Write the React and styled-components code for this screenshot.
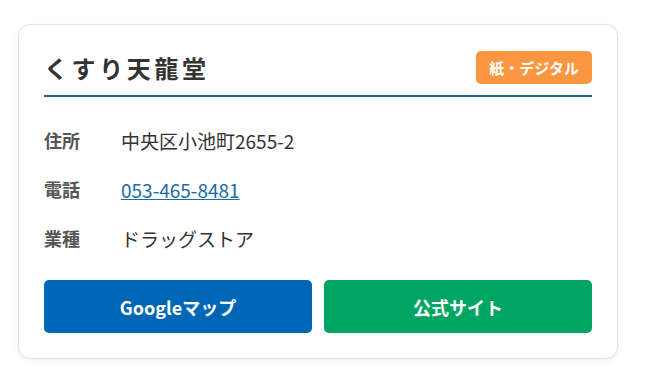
import React from 'react';
import styled, { createGlobalStyle } from 'styled-components';

const GlobalStyle = createGlobalStyle`
	html, body {
		margin: 0;
		background: #fff;
	}

	body {
		font-family: 'Noto Sans CJK JP', 'Noto Sans', sans-serif;
		color: #333;
	}
`;

const Page = styled.div`
	padding: 24px 18px;
`;

const Card = styled.section`
	width: 600px;
	box-sizing: border-box;
	padding: 26px 25px 25px;
	background: #fff;
	border: 1px solid #e2e2e2;
	border-radius: 12px;
	box-shadow: 0 2px 6px rgba(0, 0, 0, 0.06);
`;

const Header = styled.header`
	display: flex;
	align-items: center;
	justify-content: space-between;
	padding-bottom: 11px;
	border-bottom: 2px solid #1d6596;
`;

const Title = styled.h2`
	margin: 0;
	font-size: 24px;
	font-weight: 700;
	letter-spacing: 0.15em;
	line-height: 33px;
	color: #333;
`;

const Badge = styled.span`
	display: inline-flex;
	align-items: center;
	height: 33px;
	padding: 0 13px;
	border-radius: 5px;
	background: #f9963f;
	color: #fff;
	font-size: 15px;
	font-weight: 700;
`;

const InfoList = styled.dl`
	display: grid;
	grid-template-columns: 77px 1fr;
	row-gap: 22px;
	margin: 30px 0 0;
	line-height: 27px;
`;

const Label = styled.dt`
	font-size: 18px;
	font-weight: 700;
	color: #555;
`;

const Value = styled.dd`
	margin: 0;
	font-size: 19px;
	color: #333;
`;

const PhoneLink = styled.a`
	color: #1a6aa6;
	text-decoration: underline;
	text-underline-offset: 1px;
`;

const Actions = styled.div`
	display: grid;
	grid-template-columns: 1fr 1fr;
	gap: 12px;
	margin-top: 28px;
`;

const ActionButton = styled.a`
	display: flex;
	align-items: center;
	justify-content: center;
	height: 53px;
	border-radius: 5px;
	background: ${(p) => p.$bg};
	color: #fff;
	font-size: 18px;
	font-weight: 700;
	text-decoration: none;
`;

const rows = [
	{ label: '住所', value: '中央区小池町2655-2' },
	{ label: '電話', value: '053-465-8481', tel: true },
	{ label: '業種', value: 'ドラッグストア' },
];

export default function App() {
	return (
		<Page>
			<GlobalStyle />
			<Card>
				<Header>
					<Title>くすり天龍堂</Title>
					<Badge>紙・デジタル</Badge>
				</Header>
				<InfoList>
					{rows.map((row) => (
						<React.Fragment key={row.label}>
							<Label>{row.label}</Label>
							<Value>
								{row.tel ? <PhoneLink href="#">{row.value}</PhoneLink> : row.value}
							</Value>
						</React.Fragment>
					))}
				</InfoList>
				<Actions>
					<ActionButton href="#" $bg="#0067b6">Googleマップ</ActionButton>
					<ActionButton href="#" $bg="#00a463">公式サイト</ActionButton>
				</Actions>
			</Card>
		</Page>
	);
}
